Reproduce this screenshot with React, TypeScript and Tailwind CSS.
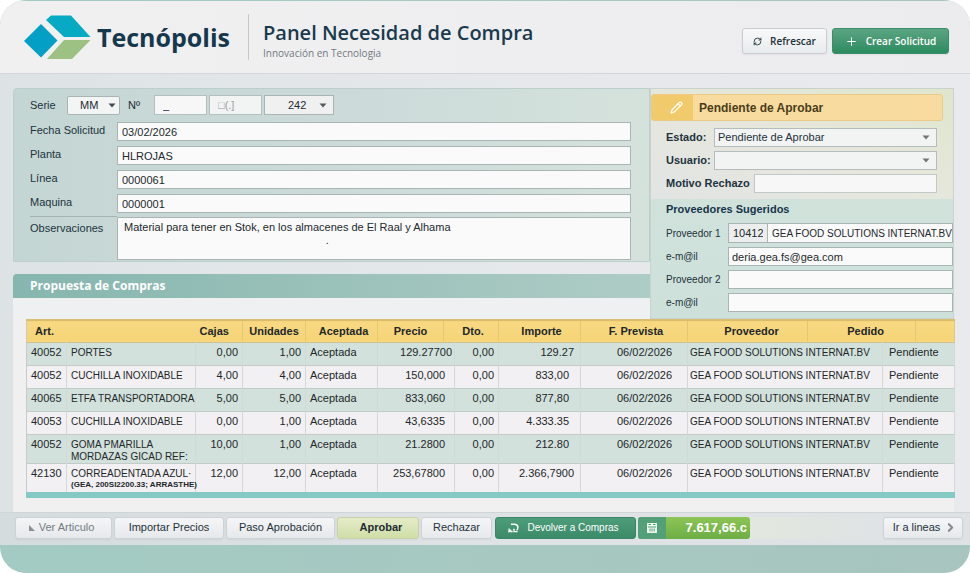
import type { ReactNode } from "react";
import { ChevronRight, Pencil, Plus, RefreshCw } from "lucide-react";

interface Line {
  art: string;
  name: string;
  detail?: string;
  small?: boolean;
  cajas: string;
  unidades: string;
  precio: string;
  importe: string;
}

const LINES: Line[] = [
  { art: "40052", name: "PORTES", cajas: "0,00", unidades: "1,00", precio: "129.27700", importe: "129.27" },
  { art: "40052", name: "CUCHILLA INOXIDABLE", cajas: "4,00", unidades: "4,00", precio: "150,000", importe: "833,00" },
  { art: "40065", name: "ETFA TRANSPORTADORA", cajas: "5,00", unidades: "5,00", precio: "833,060", importe: "877,80" },
  { art: "40053", name: "CUCHILLA INOXIDABLE", cajas: "0,00", unidades: "1,00", precio: "43,6335", importe: "4.333.35" },
  { art: "40052", name: "GOMA PMARILLA", detail: "MORDAZAS GICAD REF:", cajas: "10,00", unidades: "1,00", precio: "21.2800", importe: "212.80" },
  { art: "42130", name: "CORREADENTADA AZUL·", detail: "(GEA, 200SI2200.33; ARRASTHE)", small: true, cajas: "12,00", unidades: "12,00", precio: "253,67800", importe: "2.366,7900" },
];

const FIELDS = [
  { id: "fecha", label: "Fecha Solicitud", value: "03/02/2026" },
  { id: "planta", label: "Planta", value: "HLROJAS" },
  { id: "linea", label: "Línea", value: "0000061" },
  { id: "maquina", label: "Maquina", value: "0000001" },
];

const NOTES = "Material para tener en Stok, en los almacenes de El Raal y Alhama\n" + " ".repeat(66) + ".";

const INPUT = "block min-w-0 border border-[#a9b4b4] bg-[#fafafa] px-1 text-[11px] text-[#23292d] outline-none";
const FOOT_BUTTON =
  "flex h-[22px] items-center justify-center rounded-[3px] border border-[#cdd2d4] bg-linear-to-b from-[#f4f5f6] to-[#e6e9eb] text-[11px] font-medium whitespace-nowrap text-[#25323a] shadow-xs";

export default function App() {
  return (
    <div className="flex min-h-dvh flex-col overflow-hidden rounded-[26px] bg-linear-to-r from-[#a3cbc3] to-[#a8c5bf] pt-px font-['Liberation_Sans',Arial,sans-serif] text-[#1d2b33]">
      <Header />
      <main className="bg-linear-to-r from-[#dde3e5] via-[#e5e8ea] to-[#e9eaed] pt-[14px] pr-4 pl-[13px]">
        <div className="flex">
          <div className="flex min-w-0 flex-1 flex-col">
            <RequestForm />
            <h2 className="mt-3 h-6 rounded-tl-sm bg-linear-to-r from-[#86b6ae] to-[#aeccc6] pl-[17px] font-['Open_Sans',sans-serif] text-[12px] leading-6 font-bold text-white">
              Propuesta de Compras
            </h2>
            <div className="flex-1 bg-[#eff0f1]" />
          </div>
          <ApprovalPanel />
        </div>
        <div className="bg-[#f1f0f1] pb-[14px] pl-[13px]">
          <LinesTable />
        </div>
      </main>
      <Footer />
    </div>
  );
}

function Header() {
  return (
    <header className="flex h-[73px] items-center border-b border-[#d3d6d8] bg-linear-to-r from-[#f1f0f1] to-[#ececee] pr-[21px] pl-6 font-['Open_Sans',sans-serif]">
      <Logo />
      <span className="ml-[6px] text-[25px] leading-8 font-bold text-[#16384d]">Tecnópolis</span>
      <div className="ml-[18px] h-[46px] w-px bg-[#c5c9cc]" />
      <div className="ml-[14px] flex-1 pt-2">
        <h1 className="text-[20px] leading-6 font-semibold text-[#1a3a4e]">Panel Necesidad de Compra</h1>
        <p className="text-[10px] leading-4 text-[#6f7a80]">Innovación en Tecnologia</p>
      </div>
      <div className="mt-2 flex gap-[5px]">
        <button className="flex h-[26px] w-[85px] items-center justify-center gap-2 rounded-[3px] border border-[#c9cdd0] bg-linear-to-b from-[#f8f9f9] to-[#e8ebed] text-[10px] font-semibold text-[#22323a] shadow-xs">
          <RefreshCw size={9} strokeWidth={2.4} />
          Refrescar
        </button>
        <button className="flex h-[26px] w-[117px] items-center justify-center gap-2 rounded-[3px] border border-[#3a8f6b] bg-linear-to-b from-[#5aa583] to-[#2b8b60] text-[10px] font-semibold text-white shadow-xs">
          <Plus size={13} />
          Crear Solicitud
        </button>
      </div>
    </header>
  );
}

function Logo() {
  return (
    <svg width="67" height="45" viewBox="0 0 67 45" aria-hidden="true">
      <path d="M0 26 17 9 33.500 25.500 17 42.500Z" fill="#039fc4" />
      <path d="M22 5 27 .5H47L66.500 22H40Z" fill="#06aac2" />
      <path d="M40 25H66.500L48 44H23Z" fill="#9dc183" />
    </svg>
  );
}

function Caret({ className }: { className: string }) {
  return (
    <svg className={`pointer-events-none absolute ${className}`} width="8" height="5" viewBox="0 0 8 5" aria-hidden="true">
      <path d="M.5.5h7L4 4.500Z" fill="currentColor" />
    </svg>
  );
}

function RequestForm() {
  return (
    <section className="rounded-tl-sm border border-[#bccfcc] bg-linear-to-r from-[#c4d6d3] via-[#cbdad9] to-[#d5e2dc] pt-[6px] pr-[18px] pb-px pl-4">
      <div className="mb-[7px] flex h-5 items-center text-[11px]">
        <label htmlFor="serie" className="w-[37px] text-[#1c3340]">Serie</label>
        <div className="relative h-[19px] w-[53px]">
          <select id="serie" className="h-full w-full appearance-none rounded-xs border border-[#a9b4b4] bg-[#f3f4f4] pl-3 outline-none">
            <option>MM</option>
          </select>
          <Caret className="top-[7px] right-1 text-[#444b50]" />
        </div>
        <label htmlFor="numero" className="ml-2 w-[26px]">Nº</label>
        <input id="numero" defaultValue="_" className="h-5 w-[53px] border border-[#b4bfbf] bg-[#f7f7f7] px-2 outline-none" />
        <input aria-label="Subserie" defaultValue="□(.]" className="ml-[2px] h-5 w-[53px] border border-[#b4bfbf] bg-[#f2f3f3] px-2 text-[#9a9fa2] outline-none" />
        <div className="relative ml-[2px] h-5 w-[70px]">
          <select aria-label="Número de solicitud" className="h-full w-full appearance-none border border-[#a9b4b4] bg-[#f0f0f0] pl-[23px] outline-none">
            <option>242</option>
          </select>
          <Caret className="top-2 right-[7px] text-[#555b5f]" />
        </div>
      </div>
      {FIELDS.map((field) => (
        <div key={field.id} className="mb-[5px] flex">
          <label htmlFor={field.id} className="w-[87px] text-[11px] leading-4 text-[#1c3340]">{field.label}</label>
          <input id={field.id} defaultValue={field.value} className={`${INPUT} h-[19px] flex-1`} />
        </div>
      ))}
      <div className="-mt-[2px] flex">
        <label htmlFor="observaciones" className="w-[87px] border-t border-[#a5b3b2] pt-[3px] text-[11px] leading-4 text-[#1c3340]">
          Observaciones
        </label>
        <textarea id="observaciones" defaultValue={NOTES} className={`${INPUT} mt-px h-[43px] flex-1 resize-none py-[3px] pl-[6px] leading-[13px] whitespace-pre`} />
      </div>
    </section>
  );
}

function ApprovalPanel() {
  return (
    <section className="w-[304px] border border-[#c8d3d0] bg-linear-to-b from-[#d2e4db] to-[#cde0da]">
      <div className="bg-linear-to-tr from-[#e2e4e4] via-[#e6e7dc] to-[#dfe6cd] pt-[5px] pr-4 pb-[6px]">
        <div className="mr-[-6px] mb-[7px] flex h-[27px] items-center rounded-[3px] border border-[#ecc985] bg-[#f8dc9f] text-[#4b3c1a]">
          <span className="flex h-full w-[41px] items-center justify-center bg-[#f1ca6c] pl-2 text-white">
            <Pencil size={13} stroke="#fffaf0" strokeWidth={2.4} />
          </span>
          <h2 className="pl-[6px] text-[12px] font-bold">Pendiente de Aprobar</h2>
        </div>
        <div className="flex flex-col gap-1 pl-[15px] text-[11px] font-bold text-[#22323c]">
          <SelectRow id="estado" label="Estado:" value="Pendiente de Aprobar" />
          <SelectRow id="usuario" label="Usuario:" value="" />
          <div className="flex items-center">
            <label htmlFor="motivo" className="w-[88px]">Motivo Rechazo</label>
            <input id="motivo" className="h-[19px] min-w-0 flex-1 border border-[#c2c7c8] bg-[#f7f7f7] px-1 font-normal outline-none" />
          </div>
        </div>
      </div>
      <div className="pl-[15px] text-[11px]">
        <h3 className="mb-1 h-5 leading-5 font-bold text-[#17354a]">Proveedores Sugeridos</h3>
        <div className="flex flex-col gap-1 pb-[6px]">
          <SupplierRow id="proveedor1" label="Proveedor 1">
            <input aria-label="Código proveedor 1" defaultValue="10412" className={`${INPUT} h-5 w-10 bg-[#eceeee]!`} />
            <input id="proveedor1" defaultValue="GEA FOOD SOLUTIONS INTERNAT.BV" className={`${INPUT} h-5 flex-1 border-l-0 pr-0! text-[10px]!`} />
          </SupplierRow>
          <SupplierRow id="email1" label="e-m@il">
            <input id="email1" type="email" defaultValue="deria.gea.fs@gea.com" className={`${INPUT} h-[19px] flex-1 pl-[3px]!`} />
          </SupplierRow>
          <SupplierRow id="proveedor2" label="Proveedor 2">
            <input id="proveedor2" className={`${INPUT} h-[19px] flex-1`} />
          </SupplierRow>
          <SupplierRow id="email2" label="e-m@il">
            <input id="email2" type="email" className={`${INPUT} h-[19px] flex-1`} />
          </SupplierRow>
        </div>
      </div>
    </section>
  );
}

function SelectRow({ id, label, value }: { id: string; label: string; value: string }) {
  return (
    <div className="flex items-center">
      <label htmlFor={id} className="w-12">{label}</label>
      <div className="relative h-[19px] flex-1">
        <select id={id} className="h-full w-full appearance-none border border-[#b5bcbd] bg-[#f2f3f3] pl-[3px] font-normal outline-none">
          <option>{value}</option>
        </select>
        <Caret className="top-[7px] right-[7px] text-[#70777a]" />
      </div>
    </div>
  );
}

function SupplierRow({ id, label, children }: { id: string; label: string; children: ReactNode }) {
  return (
    <div className="flex items-center">
      <label htmlFor={id} className="w-[62px] text-[10px] text-[#22323c]">{label}</label>
      {children}
    </div>
  );
}

function LinesTable() {
  return (
    <table className="w-full table-fixed border-collapse border border-b-[6px] border-[#c6cbc9] border-b-[#84c9c4] text-[11px] leading-[13px] whitespace-nowrap text-[#22272a]">
      {/* header and body split at different points, so some cells span two columns */}
      <colgroup>
        <col className="w-[40px]" />
        <col className="w-[129px]" />
        <col className="w-[47px]" />
        <col className="w-[63px]" />
        <col className="w-[72px]" />
        <col className="w-[66px]" />
        <col className="w-[11px]" />
        <col className="w-[44px]" />
        <col className="w-[82px]" />
        <col className="w-[107px]" />
        <col className="w-[120px]" />
        <col className="w-[75px]" />
        <col className="w-[33px]" />
        <col className="w-[39px]" />
      </colgroup>
      <thead>
        <tr className="h-[22px] border-t-2 border-b border-t-[#d9bd70] border-b-[#cdbf8e] bg-linear-to-b from-[#f8d982] to-[#f6d477] *:border-r *:border-[#e3c878] *:p-0 *:pl-1 *:font-bold">
          <th colSpan={2} className="border-r-0! pl-2! text-left">Art.</th>
          <th className="text-left">Cajas</th>
          <th className="pl-0!">Unidades</th>
          <th>Aceptada</th>
          <th className="pl-0!">Precio</th>
          <th colSpan={2}>Dto.</th>
          <th>Importe</th>
          <th>F. Prevista</th>
          <th className="pl-2!">Proveedor</th>
          <th colSpan={2} className="pl-2!">Pedido</th>
          <th />
        </tr>
      </thead>
      <tbody>
        {LINES.map((line, i) => (
          <tr
            key={i}
            className="h-[23px] border-b border-[#c3cbc9] align-top odd:bg-[#d2e1db] even:bg-[#f2f0f2] last:h-8 last:bg-[#f0f0f0] nth-5:h-[29px] *:border-r *:border-[#d3d9d8] *:px-1 *:pt-[3px] *:pb-0"
          >
            <td>{line.art}</td>
            <td className="text-[10px]">
              {line.name}
              {line.detail && (
                <span className={line.small ? "block text-[8px] leading-[10px] font-bold" : "block leading-[11px]"}>{line.detail}</span>
              )}
            </td>
            <td className="text-right">{line.cajas}</td>
            <td className="text-right">{line.unidades}</td>
            <td>Aceptada</td>
            <td colSpan={2} className={line.precio === "129.27700" ? "px-[2px]! text-right" : "pr-[9px]! text-right"}>{line.precio}</td>
            <td className="text-right">0,00</td>
            <td className={line.importe === "129.27" || line.importe === "2.366,7900" ? "pr-[6px]! text-right" : "pr-[11px]! text-right"}>{line.importe}</td>
            <td className="pr-[15px]! text-right">06/02/2026</td>
            <td colSpan={2} className="pl-[2px]! text-[10px]">GEA FOOD SOLUTIONS INTERNAT.BV</td>
            <td colSpan={2} className="pl-[6px]!">Pendiente</td>
          </tr>
        ))}
      </tbody>
    </table>
  );
}

function Footer() {
  return (
    <footer className="flex h-[33px] items-center border-t border-[#d0d5d7] bg-linear-to-r from-[#d5dcde] via-[#dfe3e5] to-[#dfe2e4] pr-[7px] pb-[3px] pl-[15px]">
      <div className="flex flex-1 gap-[2px]">
        <button className={`${FOOT_BUTTON} w-[97px] gap-1 pr-1 text-[#727c81]!`}>
          <svg width="6" height="6" viewBox="0 0 6 6" aria-hidden="true">
            <path d="M0 0 6 6H0Z" fill="#8b9193" />
          </svg>
          Ver Articulo
        </button>
        <button className={`${FOOT_BUTTON} w-[110px]`}>Importar Precios</button>
        <button className={`${FOOT_BUTTON} w-[109px]`}>Paso Aprobación</button>
        <button className="flex h-[22px] w-[82px] items-center justify-center rounded-[3px] border border-[#c8d1a8] bg-linear-to-b from-[#e4ebc8] to-[#d0dea6] pl-[6px] text-[11px] font-bold shadow-xs">
          Aprobar
        </button>
        <button className={`${FOOT_BUTTON} w-[71px]`}>Rechazar</button>
        <button className="ml-px flex h-[22px] w-[141px] items-center justify-center gap-2 rounded-[3px] border border-[#3a8768] bg-linear-to-b from-[#4d9c7a] to-[#3b8b69] pr-1 text-[10px] text-white">
          <ReturnIcon />
          Devolver a Compras
        </button>
        <div className="flex h-[22px] flex-1 items-center rounded-l-[3px] bg-linear-to-r from-[#e4ead8] to-[#dfe3e5]">
          <div className="flex h-full w-[112px] items-center overflow-hidden rounded-[3px] bg-linear-to-b from-[#8dc456] to-[#6dae45] text-white">
            <span className="flex h-full w-7 items-center justify-center bg-[#539f78]">
              <CalcIcon />
            </span>
            <output className="flex-1 pr-[3px] text-right text-[13px] font-bold">7.617,66.c</output>
          </div>
        </div>
      </div>
      <a href="#lineas" className={`${FOOT_BUTTON} w-20 gap-1 pl-1`}>
        Ir a lineas
        <ChevronRight size={13} strokeWidth={4} className="text-[#858c90]" />
      </a>
    </footer>
  );
}

function ReturnIcon() {
  return (
    <svg width="11" height="10" viewBox="0 0 11 10" fill="none" stroke="currentColor" strokeWidth="1.400" aria-hidden="true">
      <path d="M3 1.200H6.500C10.200 1.200 10.800 5.200 8.600 7.200" />
      <path d="M6 5.800V8.600H9.600" />
      <path d="M0 9.500 .8 5 4.400 8.600Z" fill="currentColor" stroke="none" />
      <path d="M2.500 8.600H4.600" />
    </svg>
  );
}

function CalcIcon() {
  return (
    <svg width="10" height="10" viewBox="0 0 10 10" aria-hidden="true">
      <path d="M0 0h10v10H0Z" fill="#eef6f0" />
      <path d="M1.500 1.500h2.500M6 1.500h2.500M1 4h8M3 5.500v3M5 5.500v3M7.200 5.500v3" stroke="#539f78" strokeWidth="1" />
    </svg>
  );
}
